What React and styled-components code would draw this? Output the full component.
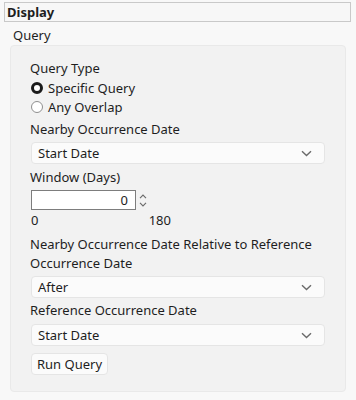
import React from 'react'
import styled, { createGlobalStyle } from 'styled-components'

const Global = createGlobalStyle`
    html, body {
        margin: 0;
        padding: 0;
        background: #f8f8f8;
    }
    body {
        font-family: "Noto Sans", "Open Sans", sans-serif;
        font-size: 13px;
        color: #1e1e1e;
    }
`;

const Page = styled.div`
    width: 356px;
    height: 400px;
    padding-top: 2px;
    box-sizing: border-box;
`;

const Header = styled.div`
    margin: 0 5px 0 4px;
    height: 20px;
    box-sizing: border-box;
    border: 1px solid #c9c9c9;
    background: #f7f7f7;
    font-weight: 700;
    line-height: 18px;
    padding-left: 2px;
`;

const Title = styled.div`
    margin: 4px 0 0 13px;
    line-height: 19px;
`;

const Panel = styled.div`
    margin: 0 10px;
    height: 347px;
    box-sizing: border-box;
    background: #f2f2f2;
    border: 1px solid #e9e9e9;
    border-radius: 4px;
    padding: 13px 20px 0 19px;
    display: flex;
    flex-direction: column;
    align-items: flex-start;
`;

const Label = styled.div`
    line-height: 19px;
    margin-top: ${(p) => p.top || 0}px;
`;

const RadioRow = styled.label`
    display: flex;
    align-items: center;
    gap: 5px;
    height: 19px;
    padding-left: 1px;
`;

const Dot = styled.span`
    width: 12px;
    height: 12px;
    box-sizing: border-box;
    border-radius: 50%;
    background: #fff;
    border: ${(p) => (p.checked ? '3px solid #1b1b1b' : '1px solid #8f8f8f')};
`;

const Select = styled.div`
    align-self: stretch;
    margin-left: 1px;
    margin-top: ${(p) => p.top || 0}px;
    height: 22px;
    box-sizing: border-box;
    background: #fbfbfb;
    border: 1px solid #e5e5e5;
    border-radius: 4px;
    display: flex;
    align-items: center;
    justify-content: space-between;
    padding: 0 12px 0 6px;
`;

const Chevron = () => (
    <svg width="11" height="7" viewBox="0 0 11 7">
        <path d="M1 1.2 L5.5 5.5 L10 1.2" fill="none" stroke="#6a6a6a" strokeWidth="1.4" />
    </svg>
);

const SpinRow = styled.div`
    display: flex;
    align-items: center;
    margin: 3px 0 0 1px;
`;

const NumberBox = styled.div`
    width: 105px;
    height: 20px;
    box-sizing: border-box;
    background: #fff;
    border: 1px solid #7d7d7d;
    text-align: right;
    padding-right: 7px;
    line-height: 18px;
`;

const Spinner = styled.div`
    display: flex;
    flex-direction: column;
    gap: 3px;
    margin-left: 3px;
`;

const Range = styled.div`
    display: flex;
    width: 140px;
    justify-content: space-between;
    line-height: 19px;
    margin: 1px 0 0 1px;
`;

const Button = styled.div`
    margin: 7px 0 0 1px;
    height: 22px;
    box-sizing: border-box;
    background: #fbfbfb;
    border: 1px solid #e5e5e5;
    border-radius: 4px;
    padding: 0 5px;
    line-height: 20px;
`;

export default function App() {
    return (
        <Page>
            <Global />
            <Header>Display</Header>
            <Title>Query</Title>
            <Panel>
                <Label>Query Type</Label>
                <RadioRow><Dot checked />Specific Query</RadioRow>
                <RadioRow><Dot />Any Overlap</RadioRow>
                <Label top={4}>Nearby Occurrence Date</Label>
                <Select top={3}>Start Date<Chevron /></Select>
                <Label top={4}>Window (Days)</Label>
                <SpinRow>
                    <NumberBox>0</NumberBox>
                    <Spinner>
                        <svg width="8" height="5" viewBox="0 0 8 5">
                            <path d="M1 4.2 L4 1 L7 4.2" fill="none" stroke="#6a6a6a" strokeWidth="1.1" />
                        </svg>
                        <svg width="8" height="5" viewBox="0 0 8 5">
                            <path d="M1 0.8 L4 4 L7 0.8" fill="none" stroke="#6a6a6a" strokeWidth="1.1" />
                        </svg>
                    </Spinner>
                </SpinRow>
                <Range><span>0</span><span>180</span></Range>
                <Label top={5}>Nearby Occurrence Date Relative to Reference<br />Occurrence Date</Label>
                <Select top={3}>After<Chevron /></Select>
                <Label top={3}>Reference Occurrence Date</Label>
                <Select top={4}>Start Date<Chevron /></Select>
                <Button>Run Query</Button>
            </Panel>
        </Page>
    )
}
